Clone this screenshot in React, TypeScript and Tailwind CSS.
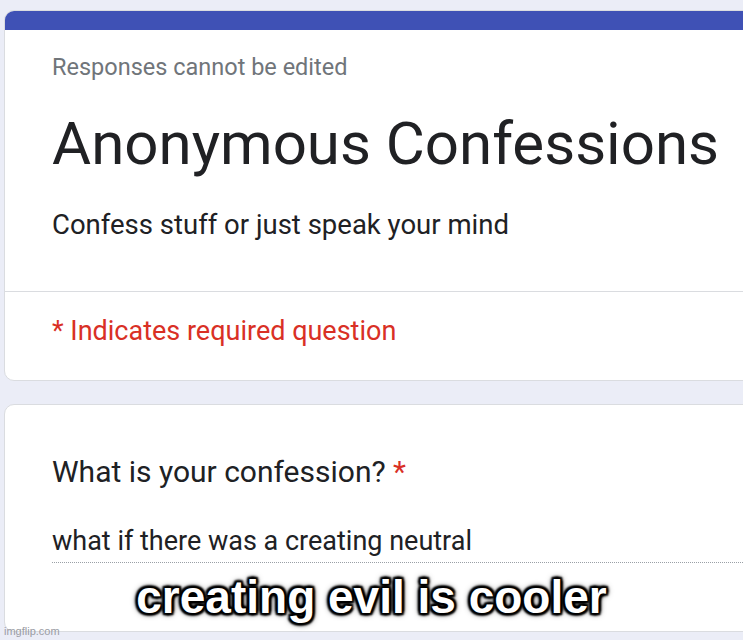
import React from 'react';

const roboto = { fontFamily: 'Roboto, "Liberation Sans", sans-serif' };

const App = () => {
  return (
    <div className="relative w-[743px] h-[640px] overflow-hidden bg-[#ebedf7]" style={roboto}>
      {/* header card */}
      <div className="ml-[4px] mt-[10px] w-[760px] rounded-[10px] border border-[#dadce0] bg-white overflow-hidden">
        <div className="h-[19px] bg-[#3f51b5]" />
        <div className="h-[261px] pl-[47px] pt-[23px]">
          <div className="text-[23.5px] leading-[28px] text-[#70757a]">Responses cannot be edited</div>
          <div className="mt-[27px] text-[60px] leading-[72px] text-[#202124]">Anonymous Confessions</div>
          <div className="mt-[28px] text-[27.5px] leading-[34px] text-[#202124]">Confess stuff or just speak your mind</div>
        </div>
        <div className="h-[89px] border-t border-[#dadce0] pl-[47px] pt-[23px]">
          <div className="text-[27px] leading-[32px] text-[#d93025]">* Indicates required question</div>
        </div>
      </div>

      {/* question card */}
      <div className="ml-[4px] mt-[23px] w-[760px] h-[228px] rounded-[10px] border border-[#dadce0] bg-white pl-[47px] pt-[49px]">
        <div className="text-[30px] leading-[36px] text-[#202124]">
          What is your confession? <span className="text-[#d93025]">*</span>
        </div>
        <div className="mt-[35px] border-b border-dotted border-[#9aa0a6] pb-[5px] text-[27px] leading-[32px] text-[#202124]">
          what if there was a creating neutral
        </div>
      </div>

      {/* meme caption */}
      <div
        className="absolute left-0 right-0 top-[569px] text-center text-[46px] leading-[56px] font-bold text-white"
        style={{
          fontFamily: '"Liberation Sans", Arial, sans-serif',
          textShadow:
            '0 0 2px #000, 2px 2px 2px #000, -2px -2px 2px #000, 2px -2px 2px #000, -2px 2px 2px #000, 0 2px 3px #000, 0 -2px 3px #000, 2px 0 3px #000, -2px 0 3px #000, 0 0 7px #000',
        }}
      >
        creating evil is cooler
      </div>

      <div
        className="absolute left-[4px] top-[624px] text-[11px] leading-[14px] text-[#9a9ca4]"
        style={{ fontFamily: '"Liberation Sans", Arial, sans-serif' }}
      >
        imgflip.com
      </div>
    </div>
  );
};

export default App;
